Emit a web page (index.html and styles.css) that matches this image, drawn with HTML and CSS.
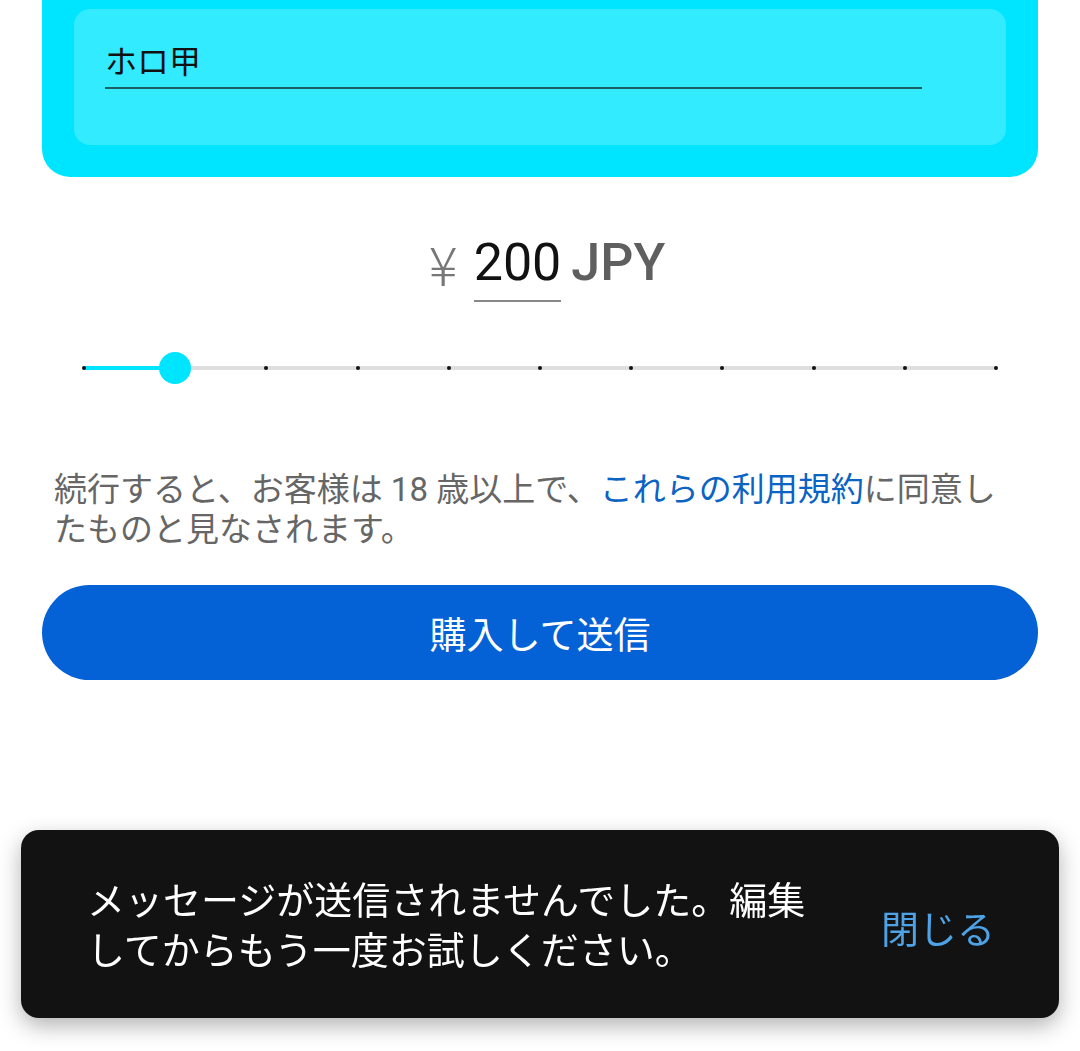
FILE: index.html
```html
<!DOCTYPE html>
<html lang="ja">

<head>
    <meta charset="UTF-8">
    <title>スーパーチャット</title>
    <link rel="stylesheet" href="styles.css">
</head>

<body>
    <div class="card">
        <div class="field">
            <div class="field-input">ホロ甲</div>
        </div>
    </div>

    <div class="amount">
        <span class="yen">¥</span>
        <span class="value">200</span>
        <span class="currency">JPY</span>
    </div>

    <div class="slider">
        <div class="track"></div>
        <div class="track-fill"></div>
        <div class="ticks">
            <span></span><span></span><span></span><span></span><span></span><span></span>
            <span></span><span></span><span></span><span></span><span></span>
        </div>
        <div class="thumb"></div>
    </div>

    <p class="terms">続行すると、お客様は 18 歳以上で、<a href="#">これらの利用規約</a>に同意したものと見なされます。</p>

    <button type="button" class="buy">購入して送信</button>

    <div class="snackbar">
        <div class="snack-text">メッセージが送信されませんでした。編集してからもう一度お試しください。</div>
        <button type="button" class="snack-close">閉じる</button>
    </div>
</body>

</html>
```

FILE: styles.css
```css
* {
    padding: 0;
    margin: 0;
    box-sizing: border-box;
}

body {
    background: #fff;
    font-family: Roboto, "Noto Sans CJK JP", sans-serif;
    width: 1080px;
    height: 1051px;
    overflow: hidden;
}

.card {
    margin: 0 42px;
    padding: 9px 32px 32px;
    background-color: #00e5ff;
    border-radius: 0 0 28px 28px;
}

.field {
    height: 136px;
    padding: 33px 84px 0 31px;
    background-color: #33ebff;
    border-radius: 16px;
}

.field-input {
    font-size: 32px;
    line-height: 40px;
    color: #111;
    padding-bottom: 5px;
    border-bottom: 2px solid #1b5e66;
}

.amount {
    display: flex;
    justify-content: center;
    align-items: flex-start;
    margin-top: 56px;
    padding-left: 14px;
    font-size: 52px;
    line-height: 60px;
}

.yen {
    color: #777;
    font-family: "Noto Sans CJK JP", sans-serif;
    font-size: 54px;
    font-weight: 300;
    line-height: 60px;
    margin-right: 16px;
}

.value {
    color: #111;
    padding-bottom: 7px;
    border-bottom: 2px solid #888;
}

.currency {
    color: #5f5f5f;
    font-weight: 500;
    margin-left: 10px;
}

.slider {
    position: relative;
    height: 32px;
    margin: 50px 84px 0;
}

.track {
    position: absolute;
    left: 0;
    right: 0;
    top: 14px;
    height: 4px;
    background-color: #dedede;
}

.track-fill {
    position: absolute;
    left: 0;
    top: 14px;
    width: 10%;
    height: 4px;
    background-color: #00e5ff;
}

.ticks {
    position: absolute;
    left: -2px;
    right: -2px;
    top: 14px;
    display: flex;
    justify-content: space-between;
}

.ticks span {
    width: 4px;
    height: 4px;
    border-radius: 50%;
    background-color: #111;
}

.thumb {
    position: absolute;
    left: 10%;
    top: 0;
    width: 32px;
    height: 32px;
    margin-left: -16px;
    border-radius: 50%;
    background-color: #00e5ff;
}

.terms {
    margin: 86px 54px 0;
    font-size: 33px;
    line-height: 40px;
    color: #666;
}

.terms a {
    color: #0b63c4;
    text-decoration: none;
}

.buy {
    display: block;
    width: 996px;
    height: 95px;
    margin: 35px 42px 0;
    border: 0;
    border-radius: 48px;
    background-color: #0561d6;
    color: #fff;
    font-family: Roboto, "Noto Sans CJK JP", sans-serif;
    font-size: 37px;
    cursor: pointer;
}

.snackbar {
    position: fixed;
    left: 21px;
    right: 21px;
    bottom: 33px;
    height: 188px;
    padding: 4px 64px 0 66px;
    display: flex;
    align-items: center;
    background-color: #121212;
    border-radius: 18px;
    box-shadow: 0 8px 22px rgba(0, 0, 0, 0.3);
}

.snack-text {
    flex: 1;
    font-size: 38px;
    line-height: 50px;
    color: #fff;
}

.snack-close {
    margin-left: 40px;
    border: 0;
    background: none;
    color: #4da3e6;
    font-family: Roboto, "Noto Sans CJK JP", sans-serif;
    font-size: 38px;
    cursor: pointer;
}
```
